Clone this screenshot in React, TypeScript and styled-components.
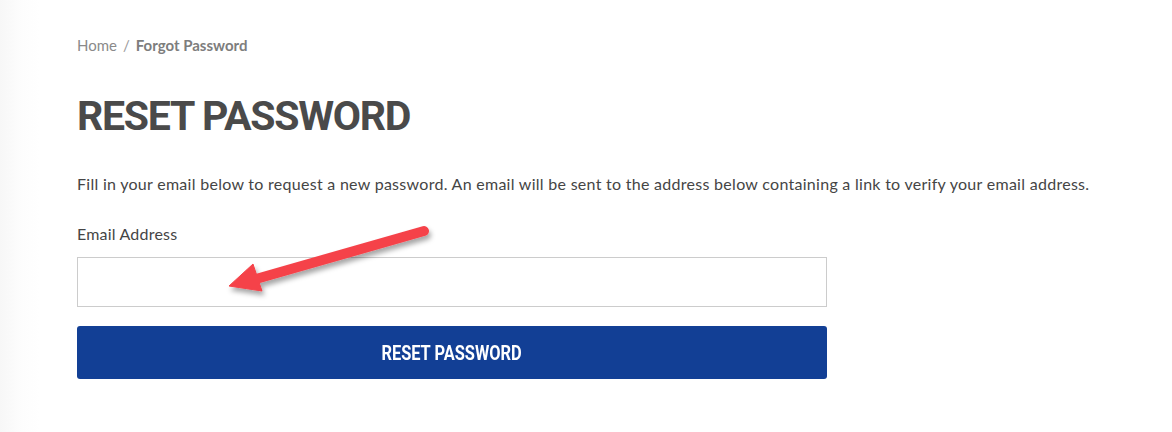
import styled, { createGlobalStyle } from "styled-components";

const GlobalStyle = createGlobalStyle`
  html, body {
    margin: 0;
    padding: 0;
    background: #fff;
  }
  body {
    font-family: "Lato", "Open Sans", sans-serif;
  }
`;

const Page = styled.div`
  position: relative;
  width: 1172px;
  height: 432px;
  overflow: hidden;
  box-sizing: border-box;
  padding: 35px 0 0 77px;
  background: linear-gradient(to right, #f7f7f7 0px, #fdfdfd 22px, #fff 40px);
`;

const Crumbs = styled.nav`
  display: flex;
  align-items: center;
  gap: 6px;
  font-size: 15px;
  line-height: 20px;
  color: #8a8a8a;
`;

const CrumbSep = styled.span`
  color: #9a9a9a;
`;

const CrumbCurrent = styled.span`
  font-weight: 700;
  color: #7d7d7d;
`;

const Title = styled.h1`
  margin: 37px 0 0;
  font-family: "Roboto", sans-serif;
  font-weight: 700;
  font-size: 41px;
  line-height: 48px;
  color: #4a4a4a;
  letter-spacing: -1.25px;
`;

const Intro = styled.p`
  margin: 32px 0 0;
  font-size: 16px;
  line-height: 24px;
  color: #454545;
  letter-spacing: 0.28px;
`;

const Form = styled.form`
  width: 750px;
  margin-top: 26px;
  display: flex;
  flex-direction: column;
`;

const Label = styled.label`
  font-size: 16px;
  line-height: 24px;
  color: #454545;
  letter-spacing: 0.2px;
`;

const Input = styled.input`
  margin-top: 11px;
  height: 50px;
  box-sizing: border-box;
  border: 1px solid #cccccc;
  background: #fff;
  padding: 0 12px;
  font-size: 16px;
  outline: none;
`;

const Submit = styled.button`
  margin-top: 19px;
  height: 53px;
  border: none;
  border-radius: 3px;
  background: #123f95;
  color: #fff;
  cursor: pointer;
`;

const SubmitText = styled.span`
  display: inline-block;
  font-family: "Roboto", sans-serif;
  font-weight: 700;
  font-size: 20px;
  text-transform: uppercase;
  transform: scaleX(0.82);
`;

const Arrow = styled.svg`
  position: absolute;
  left: 0;
  top: 0;
  pointer-events: none;
`;

export default function App() {
  return (
    <>
      <GlobalStyle />
      <Page>
        <Crumbs>
          <span>Home</span>
          <CrumbSep>/</CrumbSep>
          <CrumbCurrent>Forgot Password</CrumbCurrent>
        </Crumbs>
        <Title>RESET PASSWORD</Title>
        <Intro>
          Fill in your email below to request a new password. An email will be sent to the address below containing a link to verify your email address.
        </Intro>
        <Form onSubmit={(e) => e.preventDefault()}>
          <Label htmlFor="email">Email Address</Label>
          <Input id="email" type="email" />
          <Submit type="submit">
            <SubmitText>Reset Password</SubmitText>
          </Submit>
        </Form>
        <Arrow width="1172" height="432" viewBox="0 0 1172 432">
          <defs>
            <filter id="shadow" x="-20%" y="-20%" width="140%" height="160%">
              <feDropShadow dx="2" dy="4" stdDeviation="2.5" floodColor="#000" floodOpacity="0.35" />
            </filter>
          </defs>
          <g filter="url(#shadow)" fill="#f5434a" stroke="#f5434a">
            <line x1="424" y1="231" x2="256" y2="279" strokeWidth="10" strokeLinecap="round" />
            <polygon points="229,286 253,264 262,291" strokeWidth="1" strokeLinejoin="round" />
          </g>
        </Arrow>
      </Page>
    </>
  );
}
